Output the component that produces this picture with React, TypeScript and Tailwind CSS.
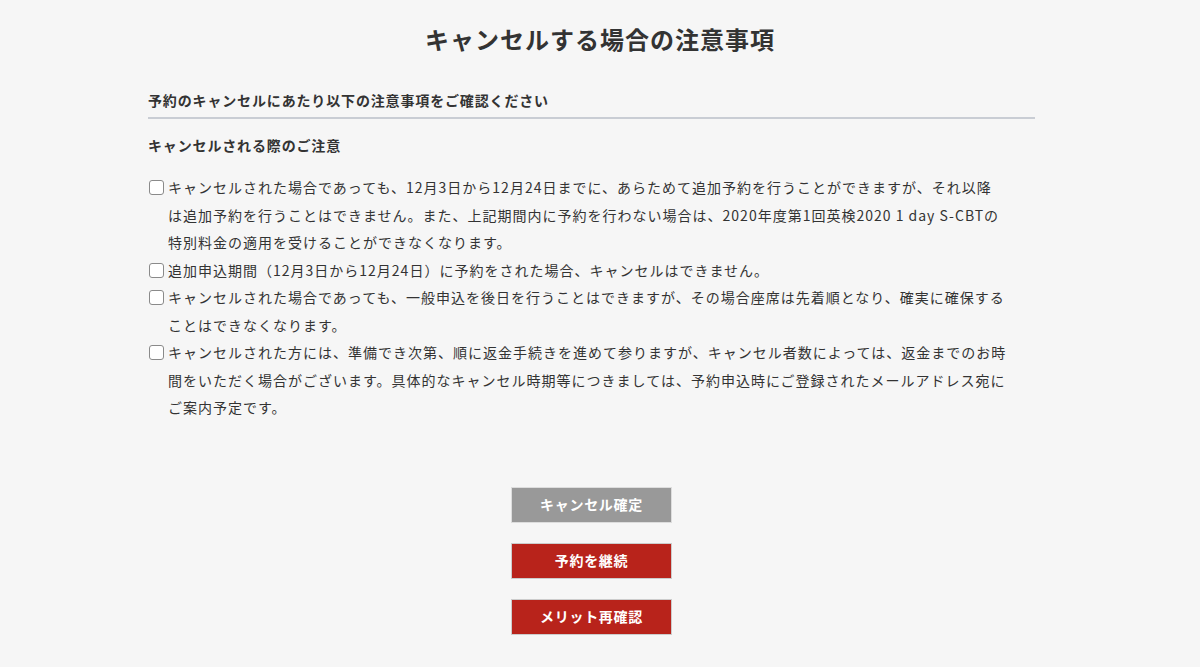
import React from "react";

const items: string[][] = [
  [
    "キャンセルされた場合であっても、12月3日から12月24日までに、あらためて追加予約を行うことができますが、それ以降",
    "は追加予約を行うことはできません。また、上記期間内に予約を行わない場合は、2020年度第1回英検2020 1 day S-CBTの",
    "特別料金の適用を受けることができなくなります。",
  ],
  ["追加申込期間（12月3日から12月24日）に予約をされた場合、キャンセルはできません。"],
  [
    "キャンセルされた場合であっても、一般申込を後日を行うことはできますが、その場合座席は先着順となり、確実に確保する",
    "ことはできなくなります。",
  ],
  [
    "キャンセルされた方には、準備でき次第、順に返金手続きを進めて参りますが、キャンセル者数によっては、返金までのお時",
    "間をいただく場合がございます。具体的なキャンセル時期等につきましては、予約申込時にご登録されたメールアドレス宛に",
    "ご案内予定です。",
  ],
];

export default function App() {
  return (
    <div
      className="min-h-[667px] w-full bg-[#f6f6f6] text-[#333333]"
      style={{ fontFamily: '"Noto Sans CJK JP", "Noto Sans", sans-serif' }}
    >
      <div className="pt-[21px] text-center text-[24px] font-bold leading-[36px] tracking-[1px] text-[#333]">
        キャンセルする場合の注意事項
      </div>
      <div className="ml-[148px] w-[887px]">
        <div className="mt-[33px] border-b-2 border-[#c9cdd4] pb-[7px] text-[14px] font-bold leading-[20px] tracking-[0.85px]">
          予約のキャンセルにあたり以下の注意事項をご確認ください
        </div>
        <div className="mt-[16px] text-[14px] font-bold leading-[20px] tracking-[0.85px]">
          キャンセルされる際のご注意
        </div>
        <div className="mt-[19px] flex flex-col">
          {items.map((lines, i) => (
            <div key={i} className="flex">
              <div className="flex h-[27px] w-[20px] shrink-0 items-center">
                <span className="ml-[1px] block h-[15px] w-[15px] rounded-[3px] border border-[#8a8a8a] bg-white" />
              </div>
              <div className="text-[14px] leading-[27.5px] tracking-[1px] whitespace-nowrap">
                {lines.map((l, j) => (
                  <div key={j}>{l}</div>
                ))}
              </div>
            </div>
          ))}
        </div>
        <div className="mt-[65px] flex flex-col items-center gap-[20px] pb-[31px]">
          <button className="h-[36px] w-[161px] border border-[#dddddd] bg-[#999999] text-[14px] font-bold tracking-[0.7px] text-white">
            キャンセル確定
          </button>
          <button className="h-[36px] w-[161px] border border-[#cccccc] bg-[#b8231b] text-[14px] font-bold tracking-[0.7px] text-white">
            予約を継続
          </button>
          <button className="h-[36px] w-[161px] border border-[#cccccc] bg-[#b8231b] text-[14px] font-bold tracking-[0.7px] text-white">
            メリット再確認
          </button>
        </div>
      </div>
    </div>
  );
}
